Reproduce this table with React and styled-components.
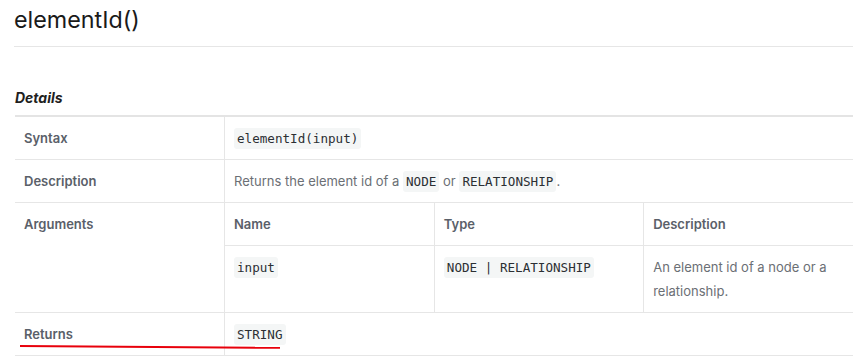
import React from 'react';
import styled, {createGlobalStyle} from 'styled-components';

const GlobalStyle = createGlobalStyle`
    html, body {
        margin: 0;
        padding: 0;
        background: #ffffff;
        overflow: hidden;
    }
    body {
        font-family: Inter, "Noto Sans", "Liberation Sans", sans-serif;
        color: #535b66;
    }
`

const Page = styled.div`
    position: relative;
    width: 853px;
    height: 359px;
    padding: 0 0 0 14px;
    box-sizing: border-box;
`

const Heading = styled.h2`
    margin: 0;
    padding: 4px 0 10px 0;
    font-size: 23.3px;
    line-height: 32px;
    font-weight: 400;
    color: #1a1a1a;
    border-bottom: 1px solid #e6e6e6;
`

const SectionTitle = styled.div`
    margin: 41px 0 7px 1px;
    font-size: 14px;
    line-height: 20px;
    font-weight: 700;
    font-style: italic;
    color: #1f1f1f;
`

const Table = styled.table`
    width: 838px;
    margin-left: 1px;
    border-collapse: collapse;
    table-layout: fixed;
    border-top: 2px solid #e4e4e4;
`

const Row = styled.tr`
    border-bottom: 1px solid #e6e6e6;
`

const Label = styled.th`
    width: 191px;
    padding: 9px 9px;
    text-align: left;
    vertical-align: top;
    font-size: 13px;
    line-height: 24px;
    font-weight: 600;
    color: #5a6069;
    border-right: 1px solid #e6e6e6;
`

const Cell = styled.td`
    padding: ${p => p.$flush ? '0' : '9px 9px'};
    vertical-align: top;
    font-size: 13px;
    line-height: 24px;
    color: #6b6f75;
`

const Inner = styled.table`
    width: 100%;
    border-collapse: collapse;
    table-layout: fixed;
`

const InnerHead = styled.th`
    padding: 9px 9px;
    text-align: left;
    vertical-align: top;
    font-size: 13px;
    line-height: 24px;
    font-weight: 600;
    color: #5a6069;
    border-bottom: 1px solid #e6e6e6;
    border-left: ${p => p.$first ? 'none' : '1px solid #e6e6e6'};
`

const InnerCell = styled.td`
    padding: 9px 9px;
    vertical-align: top;
    font-size: 13px;
    line-height: 24px;
    color: #6b6f75;
    border-left: ${p => p.$first ? 'none' : '1px solid #e6e6e6'};
`

const Code = styled.code`
    display: inline-block;
    padding: 0 3px;
    line-height: 21px;
    border-radius: 3px;
    background: #f4f6f6;
    font-family: "DejaVu Sans Mono", "Liberation Mono", monospace;
    font-size: 12.6px;
    color: #2b2f33;
`

const Underline = styled.div`
    position: absolute;
    left: 20px;
    top: 345px;
    width: 260px;
    height: 2px;
    background: #e8000b;
    transform: rotate(0.4deg);
    transform-origin: left center;
`

const App = () => {
    return (
        <>
            <GlobalStyle />
            <Page>
                <Heading>elementId()</Heading>
                <SectionTitle>Details</SectionTitle>
                <Table>
                    <tbody>
                        <Row>
                            <Label>Syntax</Label>
                            <Cell><Code>elementId(input)</Code></Cell>
                        </Row>
                        <Row>
                            <Label>Description</Label>
                            <Cell>
                                Returns the element id of a <Code>NODE</Code> or <Code>RELATIONSHIP</Code>.
                            </Cell>
                        </Row>
                        <Row>
                            <Label>Arguments</Label>
                            <Cell $flush>
                                <Inner>
                                    <tbody>
                                        <tr>
                                            <InnerHead $first>Name</InnerHead>
                                            <InnerHead>Type</InnerHead>
                                            <InnerHead>Description</InnerHead>
                                        </tr>
                                        <tr>
                                            <InnerCell $first><Code>input</Code></InnerCell>
                                            <InnerCell><Code>NODE | RELATIONSHIP</Code></InnerCell>
                                            <InnerCell>An element id of a node or a relationship.</InnerCell>
                                        </tr>
                                    </tbody>
                                </Inner>
                            </Cell>
                        </Row>
                        <Row>
                            <Label>Returns</Label>
                            <Cell><Code>STRING</Code></Cell>
                        </Row>
                    </tbody>
                </Table>
                <Underline />
            </Page>
        </>
    )
}

export default App;
